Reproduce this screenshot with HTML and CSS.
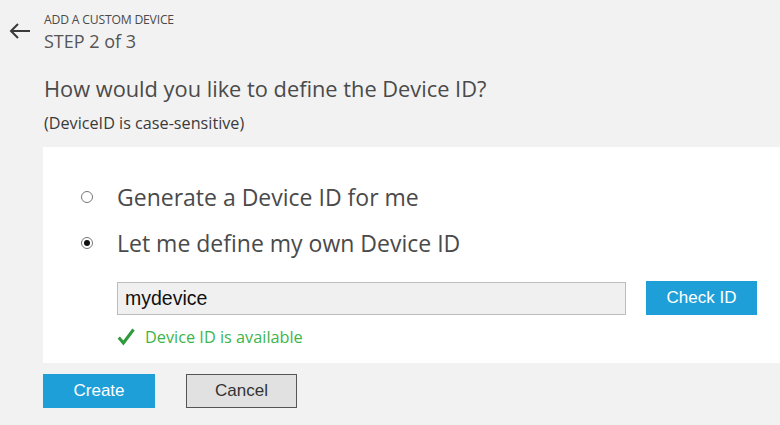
FILE: index.html
```html
<!DOCTYPE html>
<html>
<head>
<meta charset="utf-8">
<link rel="stylesheet" href="styles.css">
</head>
<body>
<div class="page">
  <header class="header">
    <button class="back" aria-label="Back">
      <svg width="22" height="16" viewBox="0 0 22 16"><path d="M21 8H2M9 1L2 8l7 7" fill="none" stroke="#3a3a3a" stroke-width="2"/></svg>
    </button>
    <div class="titles">
      <div class="kicker">ADD A CUSTOM DEVICE</div>
      <div class="step">STEP 2 of 3</div>
    </div>
  </header>

  <h1 class="question">How would you like to define the Device ID?</h1>
  <p class="note">(DeviceID is case-sensitive)</p>

  <section class="panel">
    <label class="option">
      <span class="radio"></span>
      <span class="option-text">Generate a Device ID for me</span>
    </label>
    <label class="option">
      <span class="radio checked"></span>
      <span class="option-text">Let me define my own Device ID</span>
    </label>
    <div class="id-row">
      <div class="input">mydevice</div>
      <button class="btn primary check">Check ID</button>
    </div>
    <div class="status">
      <svg width="18" height="18" viewBox="0 0 18 18"><path d="M1.8 9.5l4.6 5.5L16.5 1.5" fill="none" stroke="#2e9a3c" stroke-width="3"/></svg>
      <span>Device ID is available</span>
    </div>
  </section>

  <div class="actions">
    <button class="btn primary">Create</button>
    <button class="btn secondary">Cancel</button>
  </div>
</div>
</body>
</html>
```

FILE: styles.css
```css
html, body {
  margin: 0;
  padding: 0;
  background: #f2f2f2;
}
body {
  font-family: "Open Sans", "Noto Sans", sans-serif;
  color: #4a4a4a;
  width: 780px;
  height: 425px;
  overflow: hidden;
}
.page {
  display: flex;
  flex-direction: column;
}
.header {
  display: flex;
  align-items: flex-start;
  padding-top: 11px;
}
.back {
  width: 44px;
  height: 40px;
  padding: 12px 0 0 9px;
  margin: 0;
  border: 0;
  background: none;
  display: flex;
  align-items: flex-start;
  box-sizing: border-box;
}
.titles {
  display: flex;
  flex-direction: column;
}
.kicker {
  font-size: 12.2px;
  line-height: 17px;
  letter-spacing: -0.2px;
  color: #4a4a4a;
}
.step {
  font-size: 18px;
  line-height: 26px;
  color: #555;
}
.question {
  margin: 20px 0 0 44px;
  font-size: 21.8px;
  font-weight: 400;
  line-height: 30px;
  color: #4a4a4a;
}
.note {
  margin: 8px 0 0 44px;
  font-size: 16.2px;
  line-height: 22px;
  color: #3a3a3a;
}
.panel {
  margin: 13px 0 0 43px;
  background: #fff;
  height: 216px;
  box-sizing: border-box;
  padding: 27px 0 0 38px;
  display: flex;
  flex-direction: column;
}
.option {
  display: flex;
  align-items: center;
  height: 46px;
}
.radio {
  width: 10px;
  height: 10px;
  border: 1px solid #777;
  border-radius: 50%;
  position: relative;
  margin-right: 24px;
  background: #fff;
}
.radio.checked::after {
  content: "";
  position: absolute;
  left: 2px;
  top: 2px;
  width: 6px;
  height: 6px;
  border-radius: 50%;
  background: #111;
}
.option-text {
  font-size: 23px;
  color: #4a4a4a;
  line-height: 30px;
}
.id-row {
  display: flex;
  align-items: center;
  margin: 15px 0 0 36px;
}
.input {
  width: 509px;
  height: 33px;
  box-sizing: border-box;
  border: 1px solid #bdbdbd;
  background: #f0f0f0;
  font-family: "Liberation Sans", Arial, sans-serif;
  font-size: 19.5px;
  color: #111;
  padding: 0 7px;
  display: flex;
  align-items: center;
}
.btn {
  font-family: "Liberation Sans", Arial, sans-serif;
  font-size: 17px;
  height: 34px;
  width: 112px;
  box-sizing: border-box;
  border: 0;
  margin: 0;
  padding: 0;
}
.primary {
  background: #1e9fd8;
  color: #fff;
}
.check {
  margin-left: 20px;
  width: 111px;
}
.secondary {
  background: #e1e1e1;
  border: 1px solid #555;
  color: #333;
  width: 111px;
}
.status {
  display: flex;
  align-items: center;
  margin: 11px 0 0 36px;
  gap: 10px;
  color: #3cb54a;
  font-size: 16.3px;
  line-height: 22px;
}
.actions {
  display: flex;
  gap: 31px;
  margin: 11px 0 0 43px;
}
```
